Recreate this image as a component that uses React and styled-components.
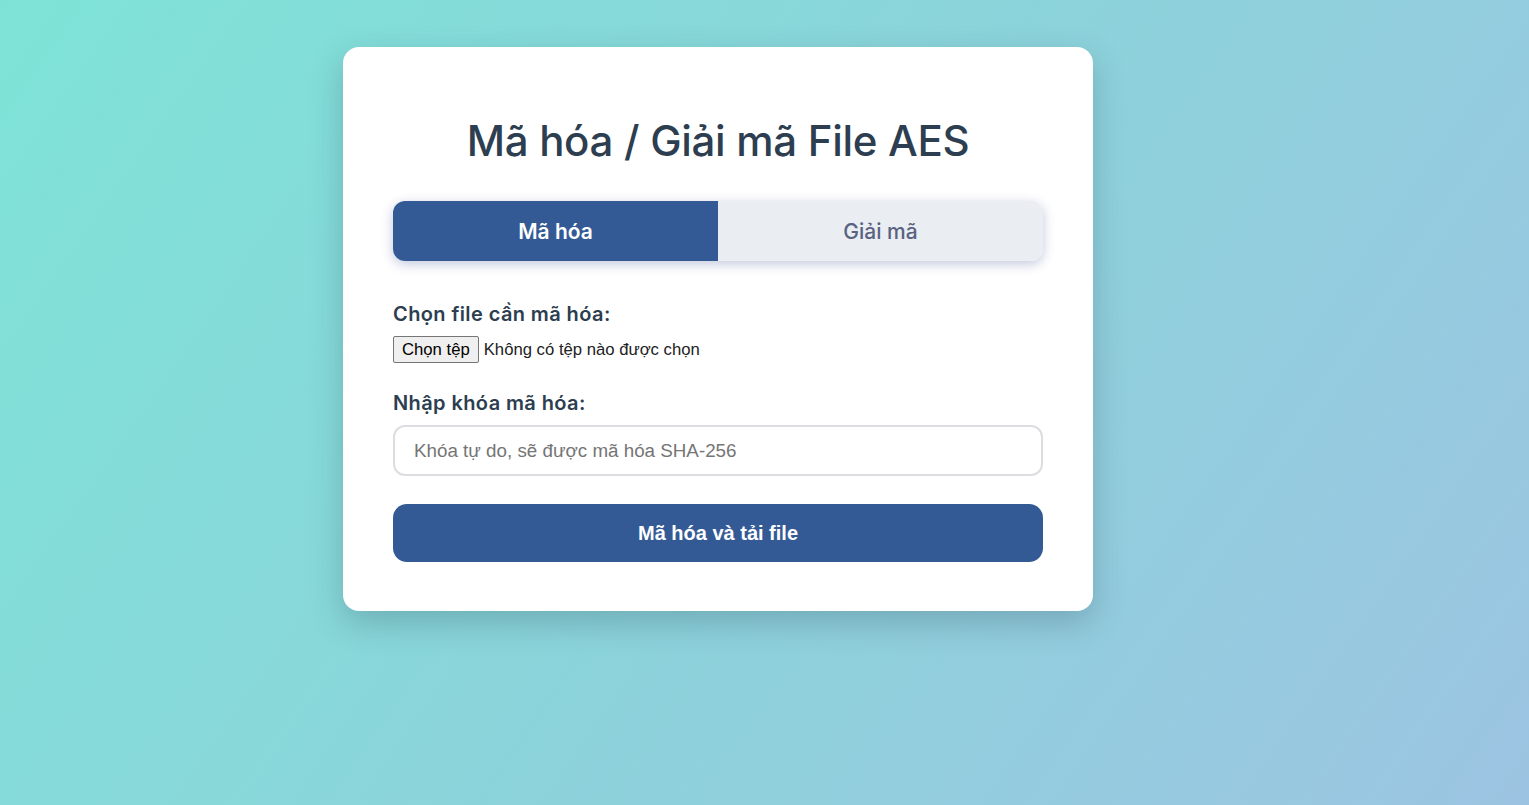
import React, { useState } from "react";
import styled, { createGlobalStyle } from "styled-components";

const Global = createGlobalStyle`
  html, body { margin: 0; padding: 0; height: 100%; }
  body {
    min-height: 805px;
    background: linear-gradient(125deg, #7ee3d7 0%, #8ad5da 45%, #9cc4e2 100%);
    font-family: Inter, "Noto Sans", sans-serif;
  }
`;

const Page = styled.div`
  display: flex;
  justify-content: center;
  padding-top: 47px;
  padding-right: 93px;
`;

const Card = styled.div`
  width: 650px;
  background: #fff;
  border-radius: 16px;
  padding: 17px 50px 49px;
  box-shadow: 0 12px 32px rgba(30, 60, 80, 0.25);
  display: flex;
  flex-direction: column;
`;

const Title = styled.h1`
  margin: 50px 0 34px;
  height: 53px;
  line-height: 53px;
  text-align: center;
  font-family: Inter, sans-serif;
  font-weight: 500;
  font-size: 42px;
  letter-spacing: -0.3px;
  color: #2c3e50;
`;

const Tabs = styled.div`
  display: flex;
  height: 60px;
  border-radius: 12px;
  overflow: hidden;
  box-shadow: 0 3px 12px rgba(52, 70, 143, 0.3);
`;

const Tab = styled.button`
  flex: 1;
  border: none;
  margin: 0;
  font-family: Inter, sans-serif;
  font-size: 21px;
  font-weight: ${(p) => (p.$active ? 600 : 500)};
  letter-spacing: 0;
  color: ${(p) => (p.$active ? "#fff" : "#5a6282")};
  background: ${(p) => (p.$active ? "#345a95" : "#eaeef2")};
  cursor: pointer;
`;

const Field = styled.div`
  display: flex;
  flex-direction: column;
  margin-top: ${(p) => p.$mt}px;
`;

const Label = styled.label`
  font-family: Inter, sans-serif;
  font-weight: 600;
  font-size: 20px;
  line-height: 24px;
  letter-spacing: 0.4px;
  color: #2c3e50;
`;

const FileRow = styled.div`
  display: flex;
  align-items: center;
  gap: 5px;
  margin-top: 10px;
  height: 27px;
  font-family: "Liberation Sans", Arial, sans-serif;
  font-size: 16.7px;
  color: #222;
`;

const FileButton = styled.span`
  display: inline-flex;
  align-items: center;
  height: 25px;
  padding: 0 8px;
  border: 1px solid #767676;
  border-radius: 2px;
  background: #efefef;
  color: #000;
`;

const Input = styled.input`
  margin-top: 10px;
  height: 51px;
  box-sizing: border-box;
  border: 2px solid #dcdde0;
  border-radius: 12px;
  padding: 0 19px;
  font-family: "Liberation Sans", Arial, sans-serif;
  font-size: 18.8px;
  outline: none;
  &::placeholder { color: #757575; }
`;

const Submit = styled.button`
  margin-top: 28px;
  height: 58px;
  border: none;
  border-radius: 14px;
  background: #345a95;
  color: #fff;
  font-family: "Liberation Sans", Arial, sans-serif;
  font-weight: 700;
  font-size: 20px;
  cursor: pointer;
`;

export default function App() {
  const [mode, setMode] = useState("enc");
  return (
    <>
      <Global />
      <Page>
        <Card>
          <Title>Mã hóa / Giải mã File AES</Title>
          <Tabs>
            <Tab $active={mode === "enc"} onClick={() => setMode("enc")}>Mã hóa</Tab>
            <Tab $active={mode === "dec"} onClick={() => setMode("dec")}>Giải mã</Tab>
          </Tabs>
          <Field $mt={41}>
            <Label>Chọn file cần mã hóa:</Label>
            <FileRow>
              <FileButton>Chọn tệp</FileButton>
              <span>Không có tệp nào được chọn</span>
            </FileRow>
          </Field>
          <Field $mt={28}>
            <Label>Nhập khóa mã hóa:</Label>
            <Input placeholder="Khóa tự do, sẽ được mã hóa SHA-256" />
          </Field>
          <Submit>Mã hóa và tải file</Submit>
        </Card>
      </Page>
    </>
  );
}
